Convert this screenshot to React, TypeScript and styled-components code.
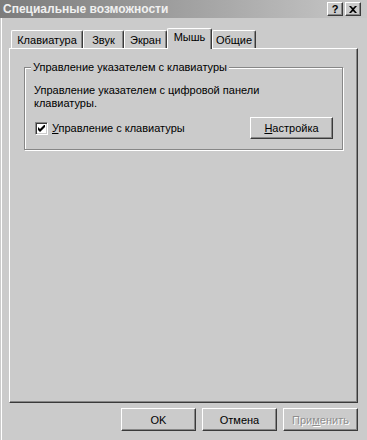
import React from 'react';
import styled, { createGlobalStyle } from 'styled-components';

const face = '#cbcbcb';
const light = '#ffffff';
const shadow = '#878787';
const dark = '#3a3a3a';

const GlobalStyle = createGlobalStyle`
  html, body {
    margin: 0;
    padding: 0;
    background: ${face};
  }
  body {
    font-family: 'Liberation Sans', Arial, sans-serif;
    font-size: 11px;
    color: #000;
  }
`;

const Window = styled.div`
  width: 367px;
  height: 440px;
  display: flex;
  flex-direction: column;
  background: ${face};
  overflow: hidden;
`;

const TitleBar = styled.div`
  flex: none;
  height: 18px;
  display: flex;
  align-items: center;
  padding: 0 6px 0 3px;
  background: linear-gradient(to right, #7c7c7c 0%, #a4a4a4 55%, #c8c8c8 100%);
`;

const Title = styled.span`
  flex: 1;
  font-weight: bold;
  font-size: 12px;
  color: #f0f0f0;
  white-space: nowrap;
`;

const CaptionButton = styled.button`
  width: 16px;
  height: 14px;
  margin: 0 0 0 2px;
  padding: 0;
  display: flex;
  align-items: center;
  justify-content: center;
  background: ${face};
  border: 1px solid;
  border-color: ${light} ${dark} ${dark} ${light};
  box-shadow: inset -1px -1px ${shadow};
  font-family: 'Liberation Sans', Arial, sans-serif;
  font-weight: bold;
  font-size: 11px;
  line-height: 1;
  color: #000;
`;

const Body = styled.div`
  flex: 1;
  display: flex;
  flex-direction: column;
  padding: 10px 9px 9px 9px;
  box-shadow: inset 1px 0 ${face}, inset 2px 0 ${light};
`;

const TabStrip = styled.div`
  flex: none;
  display: flex;
  align-items: flex-end;
  height: 20px;
  padding-left: 2px;
  position: relative;
  z-index: 1;
`;

const Tab = styled.div<{ $w: number; $active?: boolean }>`
  box-sizing: border-box;
  width: ${(p) => p.$w}px;
  height: ${(p) => (p.$active ? 21 : 18)}px;
  margin-bottom: ${(p) => (p.$active ? -1 : 0)}px;
  display: flex;
  justify-content: center;
  padding-top: ${(p) => (p.$active ? 2 : 3)}px;
  background: ${face};
  border-top: 1px solid ${light};
  border-left: 1px solid ${light};
  border-right: 1px solid ${dark};
  border-radius: 2px 2px 0 0;
  box-shadow: inset -1px 0 ${shadow};
  line-height: 13px;
  white-space: nowrap;
`;

const Panel = styled.div`
  flex: 1;
  padding: 12px 14px;
  border-top: 1px solid ${light};
  border-left: 1px solid ${light};
  border-right: 1px solid ${dark};
  border-bottom: 1px solid ${dark};
  box-shadow: inset -1px -1px ${shadow};
`;

const GroupBox = styled.fieldset`
  margin: 0;
  padding: 10px 9px 10px 9px;
  border: 1px solid ${shadow};
  box-shadow: inset 1px 1px ${light}, 1px 1px ${light};
`;

const Legend = styled.legend`
  margin-left: -3px;
  padding: 0 2px;
  line-height: 13px;
  background: ${face};
`;

const Description = styled.p`
  margin: 0;
  line-height: 13px;
  width: 240px;
`;

const OptionRow = styled.div`
  display: flex;
  align-items: center;
  justify-content: space-between;
  margin-top: 7px;
  padding-left: 1px;
`;

const CheckLabel = styled.label`
  display: flex;
  align-items: center;
  gap: 4px;
  line-height: 13px;
`;

const CheckBox = styled.span`
  box-sizing: border-box;
  width: 13px;
  height: 13px;
  display: flex;
  align-items: center;
  justify-content: center;
  background: ${light};
  border: 1px solid;
  border-color: ${shadow} ${light} ${light} ${shadow};
  box-shadow: inset 1px 1px ${dark}, inset -1px -1px ${face};
`;

const Button = styled.button<{ $w: number; $h?: number }>`
  box-sizing: border-box;
  width: ${(p) => p.$w}px;
  height: ${(p) => p.$h ?? 23}px;
  padding: 0;
  background: ${face};
  border: 1px solid;
  border-color: ${light} ${dark} ${dark} ${light};
  box-shadow: inset -1px -1px ${shadow};
  font-family: 'Liberation Sans', Arial, sans-serif;
  font-size: 11px;
  color: #000;

  &:disabled {
    color: #8e8e8e;
    text-shadow: 1px 1px ${light};
  }
`;

const ButtonRow = styled.div`
  flex: none;
  display: flex;
  justify-content: flex-end;
  gap: 6px;
  margin-top: 5px;
`;

const Key = styled.span`
  text-decoration: underline;
`;

const tabs = [
  { label: 'Клавиатура', w: 72 },
  { label: 'Звук', w: 41 },
  { label: 'Экран', w: 43 },
  { label: 'Мышь', w: 45, active: true },
  { label: 'Общие', w: 44 },
];

export default function App() {
  return (
    <>
      <GlobalStyle />
      <Window>
        <TitleBar>
          <Title>Специальные возможности</Title>
          <CaptionButton>?</CaptionButton>
          <CaptionButton>
            <svg width="8" height="7" viewBox="0 0 8 7">
              <path d="M0 0h2l2 2 2-2h2L5 3.5 8 7H6L4 5 2 7H0l3-3.5z" fill="#000" />
            </svg>
          </CaptionButton>
        </TitleBar>
        <Body>
          <TabStrip>
            {tabs.map((t) => (
              <Tab key={t.label} $w={t.w} $active={t.active}>
                {t.label}
              </Tab>
            ))}
          </TabStrip>
          <Panel>
            <GroupBox>
              <Legend>Управление указателем с клавиатуры</Legend>
              <Description>
                Управление указателем с цифровой панели клавиатуры.
              </Description>
              <OptionRow>
                <CheckLabel>
                  <CheckBox>
                    <svg width="7" height="7" viewBox="0 0 7 7">
                      <path d="M0 2l2 2 5-5v3L2 7 0 5z" fill="#000" />
                    </svg>
                  </CheckBox>
                  <span>
                    <Key>У</Key>правление с клавиатуры
                  </span>
                </CheckLabel>
                <Button $w={83} $h={22}>
                  <Key>Н</Key>астройка
                </Button>
              </OptionRow>
            </GroupBox>
          </Panel>
          <ButtonRow>
            <Button $w={75}>OK</Button>
            <Button $w={75}>Отмена</Button>
            <Button $w={75} disabled>
              При<Key>м</Key>енить
            </Button>
          </ButtonRow>
        </Body>
      </Window>
    </>
  );
}
